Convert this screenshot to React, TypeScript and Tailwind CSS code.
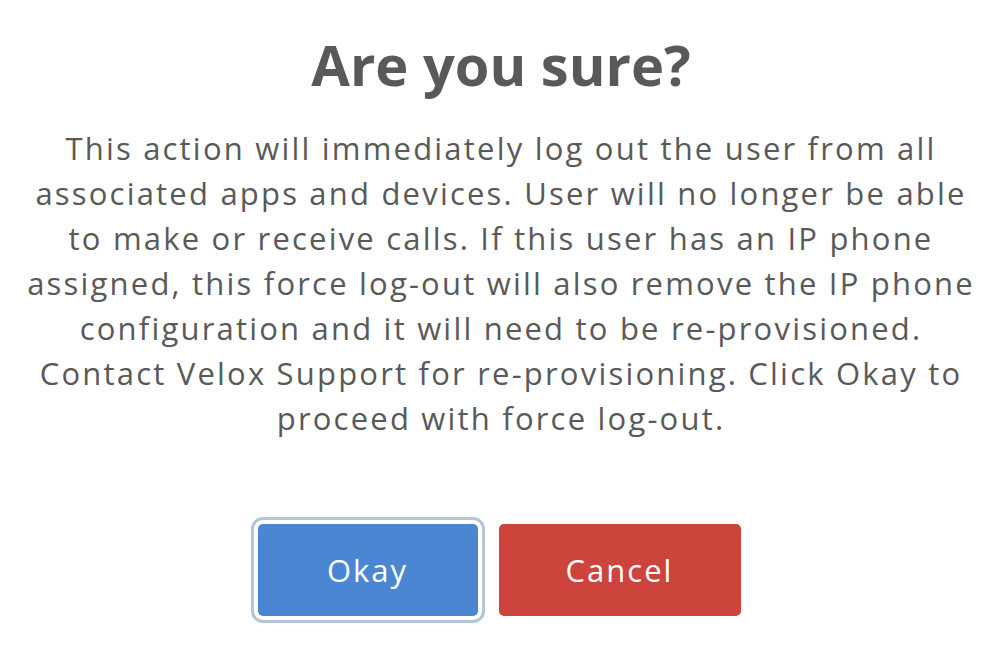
import React from "react";

const lines = [
  "This action will immediately log out the user from all",
  "associated apps and devices. User will no longer be able",
  "to make or receive calls. If this user has an IP phone",
  "assigned, this force log-out will also remove the IP phone",
  "configuration and it will need to be re-provisioned.",
  "Contact Velox Support for re-provisioning. Click Okay to",
  "proceed with force log-out.",
];

export default function App() {
  return (
    <div className="w-full h-[664px] bg-white flex flex-col items-center pt-[26px] font-['Open_Sans',sans-serif]">
      <h2 className="text-[56px] leading-[76px] font-bold text-[#595959]">
        Are you sure?
      </h2>
      <div className="mt-[24px] flex flex-col items-center text-[31px] leading-[45px] tracking-[2.2px] text-[#595959]">
        {lines.map((l) => (
          <div key={l} className="whitespace-nowrap">
            {l}
          </div>
        ))}
      </div>
      <div className="mt-[83px] flex items-center gap-[21px] pr-[4px]">
        <button className="w-[220px] h-[92px] rounded-[5px] bg-[#4a86d1] text-white text-[31px] tracking-[2px] ring-[3px] ring-[#b5c5d9] ring-offset-4 ring-offset-white">
          Okay
        </button>
        <button className="w-[242px] h-[92px] rounded-[5px] bg-[#cc443c] text-white text-[31px] tracking-[2px]">
          Cancel
        </button>
      </div>
    </div>
  );
}
